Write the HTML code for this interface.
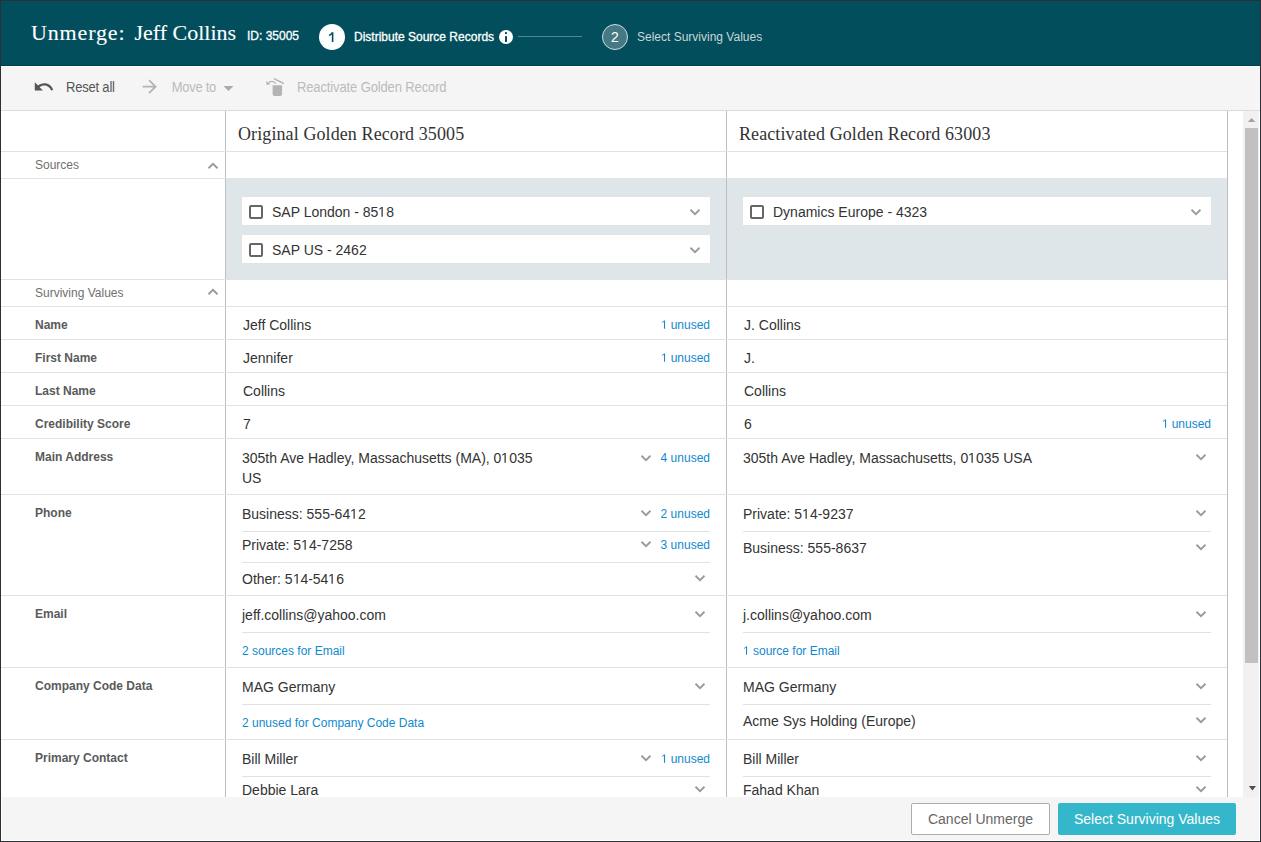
<!DOCTYPE html>
<html><head><meta charset="utf-8"><style>
html,body{margin:0;padding:0;width:1261px;height:842px;overflow:hidden;background:#2c3034}
.t{position:absolute;white-space:nowrap;line-height:20px}
</style></head><body>
<div style="position:absolute;left:0px;top:0px;width:1261px;height:842px;background:#2c3034"></div>
<div style="position:absolute;left:1px;top:1px;width:1259px;height:840px;background:#fff"></div>
<div style="position:absolute;left:1px;top:1px;width:1259px;height:65px;background:#024e5c"></div>
<div style="position:absolute;left:1px;top:65px;width:1259px;height:1px;background:#023f4a"></div>
<div class="t" style="left:31px;top:23px;font-family:'Liberation Serif', serif;font-size:22px;color:#fff;letter-spacing:0.85px;-webkit-text-stroke:0.1px #fff;">Unmerge:</div>
<div class="t" style="left:134.5px;top:23px;font-family:'Liberation Serif', serif;font-size:22px;color:#fff;-webkit-text-stroke:0.1px #fff;">Jeff Collins</div>
<div class="t" style="left:247px;top:26px;font-family:'Liberation Sans', sans-serif;font-size:12px;color:#fff;-webkit-text-stroke:0.3px #fff;">ID: 35005</div>
<div style="position:absolute;left:319px;top:24px;width:26px;height:26px;background:#fff;border-radius:50%"></div>
<svg style="position:absolute;left:0;top:0" width="400" height="60"><path d="M331.6,32.2 H333.4 V42 H331.8 V34.6 Q330.6,35.6 328.9,36.2 V34.7 Q330.8,33.8 331.6,32.2z" fill="#024e5c"/></svg>
<div class="t" style="left:354px;top:27px;font-family:'Liberation Sans', sans-serif;font-size:12px;color:#fff;-webkit-text-stroke:0.3px #fff;">Distribute Source Records</div>
<div style="position:absolute;left:499px;top:30px;width:14px;height:14px;background:#fff;border-radius:50%"></div>
<div style="position:absolute;left:505px;top:35.8px;width:2.4px;height:6px;background:#024e5c;border-radius:0.5px"></div>
<div style="position:absolute;left:505px;top:32.2px;width:2.4px;height:2px;background:#024e5c;border-radius:0.5px"></div>
<div style="position:absolute;left:518px;top:36px;width:64px;height:1px;background:#4f8792"></div>
<div style="position:absolute;left:602px;top:24px;width:26px;height:26px;background:#457a84;border-radius:50%;box-sizing:border-box;border:1px solid #d0dcde"></div>
<div class="t" style="left:602px;top:27px;font-family:'Liberation Sans', sans-serif;font-size:14px;color:#fff;width:26px;text-align:center;">2</div>
<div class="t" style="left:637px;top:27px;font-family:'Liberation Sans', sans-serif;font-size:12px;color:#c9d6d9;">Select Surviving Values</div>
<div style="position:absolute;left:1px;top:66px;width:1259px;height:1px;background:#fff"></div>
<div style="position:absolute;left:1px;top:67px;width:1259px;height:43px;background:#f5f5f5"></div>
<div style="position:absolute;left:1px;top:110px;width:1259px;height:1px;background:#dcdcdc"></div>
<div class="t" style="left:66px;top:78px;font-family:'Liberation Sans', sans-serif;font-size:13px;color:#555;letter-spacing:-0.2px;transform:scaleY(1.07);transform-origin:0 14px;">Reset all</div>
<svg style="position:absolute;left:32.7px;top:76px" width="24" height="24" viewBox="0 0 24 24"><g transform="scale(0.9)"><path fill="#555" d="M12.5 8c-2.65 0-5.05.99-6.9 2.6L2 7v9h9l-3.62-3.62c1.39-1.16 3.16-1.88 5.12-1.88 3.54 0 6.55 2.31 7.6 5.5l2.37-.78C21.08 11.03 17.15 8 12.5 8z"/></g></svg>
<svg style="position:absolute;left:139.4px;top:76px" width="24" height="24" viewBox="0 0 24 24"><g transform="scale(0.89)"><path fill="#b3b3b3" d="M12 4l-1.41 1.41L16.17 11H4v2h12.17l-5.58 5.59L12 20l8-8z"/></g></svg>
<svg style="position:absolute;left:0;top:0" width="300" height="100"><path d="M223.5,86.1 L233.5,86.1 L228.5,91.1z" fill="#aaa"/><path d="M272.6,85.2 H282.1 V94 Q282.1,95.9 280.2,95.9 H274.5 Q272.6,95.9 272.6,94z" fill="#b4b4b4"/><path d="M274,78.6 L283.8,83.6" stroke="#b4b4b4" stroke-width="1.6"/><path d="M275.8,83.6 Q272.5,79.6 268.8,82.6" fill="none" stroke="#b4b4b4" stroke-width="1.3"/><path d="M266.3,81 L266.5,84.9 L270.5,84.3z" fill="#b4b4b4"/></svg>
<div class="t" style="left:171.8px;top:78px;font-family:'Liberation Sans', sans-serif;font-size:13px;color:#bbb;letter-spacing:-0.3px;transform:scaleY(1.07);transform-origin:0 14px;">Move to</div>
<div class="t" style="left:297px;top:78px;font-family:'Liberation Sans', sans-serif;font-size:13px;color:#bbb;letter-spacing:-0.125px;transform:scaleY(1.07);transform-origin:0 14px;">Reactivate Golden Record</div>
<div style="position:absolute;left:225px;top:111px;width:1px;height:686px;background:#bdbdbd"></div>
<div style="position:absolute;left:726px;top:111px;width:1px;height:686px;background:#bdbdbd"></div>
<div style="position:absolute;left:1227px;top:111px;width:1px;height:686px;background:#bdbdbd"></div>
<div style="position:absolute;left:1px;top:151px;width:1226px;height:1px;background:#e2e2e2"></div>
<div style="position:absolute;left:1px;top:178px;width:1226px;height:1px;background:#e2e2e2"></div>
<div style="position:absolute;left:1px;top:279px;width:1226px;height:1px;background:#e2e2e2"></div>
<div style="position:absolute;left:1px;top:306px;width:1226px;height:1px;background:#e2e2e2"></div>
<div style="position:absolute;left:1px;top:339px;width:1226px;height:1px;background:#e2e2e2"></div>
<div style="position:absolute;left:1px;top:372px;width:1226px;height:1px;background:#e2e2e2"></div>
<div style="position:absolute;left:1px;top:405px;width:1226px;height:1px;background:#e2e2e2"></div>
<div style="position:absolute;left:1px;top:438px;width:1226px;height:1px;background:#e2e2e2"></div>
<div style="position:absolute;left:1px;top:494px;width:1226px;height:1px;background:#e2e2e2"></div>
<div style="position:absolute;left:1px;top:595px;width:1226px;height:1px;background:#e2e2e2"></div>
<div style="position:absolute;left:1px;top:667px;width:1226px;height:1px;background:#e2e2e2"></div>
<div style="position:absolute;left:1px;top:739px;width:1226px;height:1px;background:#e2e2e2"></div>
<div class="t" style="left:238px;top:124px;font-family:'Liberation Serif', serif;font-size:18px;color:#333;letter-spacing:0.1px;">Original Golden Record 35005</div>
<div class="t" style="left:739px;top:124px;font-family:'Liberation Serif', serif;font-size:18px;color:#333;letter-spacing:0.1px;">Reactivated Golden Record 63003</div>
<div class="t" style="left:35px;top:155px;font-family:'Liberation Sans', sans-serif;font-size:12px;color:#707070;">Sources</div>
<svg style="position:absolute;left:203px;top:158.5px" width="20" height="14"><path d="M5.5,9.25 L10,4.75 L14.5,9.25" fill="none" stroke="#9a9a9a" stroke-width="1.8"/></svg>
<div class="t" style="left:35px;top:283px;font-family:'Liberation Sans', sans-serif;font-size:12px;color:#707070;">Surviving Values</div>
<svg style="position:absolute;left:203px;top:284.5px" width="20" height="14"><path d="M5.5,9.25 L10,4.75 L14.5,9.25" fill="none" stroke="#9a9a9a" stroke-width="1.8"/></svg>
<div style="position:absolute;left:226px;top:179px;width:500px;height:100px;background:#dfe6e9"></div>
<div style="position:absolute;left:727px;top:179px;width:500px;height:100px;background:#dfe6e9"></div>
<div style="position:absolute;left:241px;top:196px;width:470px;height:30px;background:#fff;box-sizing:border-box;border:1px solid #e3e3e3"></div>
<div style="position:absolute;left:249px;top:205px;width:14px;height:14px;box-sizing:border-box;border:2px solid #666;border-radius:2px;background:#fff"></div>
<div class="t" style="left:272px;top:202px;font-family:'Liberation Sans', sans-serif;font-size:14px;color:#333;">SAP London - 85<svg width="7.786" height="12.674" viewBox="0 0 1139 1854" style="vertical-align:baseline"><path fill="#333" transform="translate(0,1854) scale(1,-1)" d="M515 0V1237L197 1010V1180L530 1409H696V0Z"/></svg>8</div>
<svg style="position:absolute;left:685px;top:205px" width="20" height="14"><path d="M5.5,4.75 L10,9.25 L14.5,4.75" fill="none" stroke="#9a9a9a" stroke-width="1.8"/></svg>
<div style="position:absolute;left:241px;top:234px;width:470px;height:30px;background:#fff;box-sizing:border-box;border:1px solid #e3e3e3"></div>
<div style="position:absolute;left:249px;top:243px;width:14px;height:14px;box-sizing:border-box;border:2px solid #666;border-radius:2px;background:#fff"></div>
<div class="t" style="left:272px;top:240px;font-family:'Liberation Sans', sans-serif;font-size:14px;color:#333;">SAP US - 2462</div>
<svg style="position:absolute;left:685px;top:243px" width="20" height="14"><path d="M5.5,4.75 L10,9.25 L14.5,4.75" fill="none" stroke="#9a9a9a" stroke-width="1.8"/></svg>
<div style="position:absolute;left:742px;top:196px;width:470px;height:30px;background:#fff;box-sizing:border-box;border:1px solid #e3e3e3"></div>
<div style="position:absolute;left:750px;top:205px;width:14px;height:14px;box-sizing:border-box;border:2px solid #666;border-radius:2px;background:#fff"></div>
<div class="t" style="left:773px;top:202px;font-family:'Liberation Sans', sans-serif;font-size:14px;color:#333;">Dynamics Europe - 4323</div>
<svg style="position:absolute;left:1186px;top:205px" width="20" height="14"><path d="M5.5,4.75 L10,9.25 L14.5,4.75" fill="none" stroke="#9a9a9a" stroke-width="1.8"/></svg>
<div class="t" style="left:35px;top:315px;font-family:'Liberation Sans', sans-serif;font-size:12px;font-weight:bold;color:#5a5a5a;">Name</div>
<div class="t" style="left:35px;top:348px;font-family:'Liberation Sans', sans-serif;font-size:12px;font-weight:bold;color:#5a5a5a;">First Name</div>
<div class="t" style="left:35px;top:381px;font-family:'Liberation Sans', sans-serif;font-size:12px;font-weight:bold;color:#5a5a5a;">Last Name</div>
<div class="t" style="left:35px;top:414px;font-family:'Liberation Sans', sans-serif;font-size:12px;font-weight:bold;color:#5a5a5a;">Credibility Score</div>
<div class="t" style="left:35px;top:447px;font-family:'Liberation Sans', sans-serif;font-size:12px;font-weight:bold;color:#5a5a5a;">Main Address</div>
<div class="t" style="left:35px;top:503px;font-family:'Liberation Sans', sans-serif;font-size:12px;font-weight:bold;color:#5a5a5a;">Phone</div>
<div class="t" style="left:35px;top:604px;font-family:'Liberation Sans', sans-serif;font-size:12px;font-weight:bold;color:#5a5a5a;">Email</div>
<div class="t" style="left:35px;top:676px;font-family:'Liberation Sans', sans-serif;font-size:12px;font-weight:bold;color:#5a5a5a;">Company Code Data</div>
<div class="t" style="left:35px;top:748px;font-family:'Liberation Sans', sans-serif;font-size:12px;font-weight:bold;color:#5a5a5a;">Primary Contact</div>
<div class="t" style="left:243px;top:315px;font-family:'Liberation Sans', sans-serif;font-size:14px;color:#333;">Jeff Collins</div>
<div class="t" style="right:551px;top:315px;font-family:'Liberation Sans', sans-serif;font-size:12px;color:#0f89cf;"><svg width="6.674" height="10.863" viewBox="0 0 1139 1854" style="vertical-align:baseline"><path fill="#0f89cf" transform="translate(0,1854) scale(1,-1)" d="M515 0V1237L197 1010V1180L530 1409H696V0Z"/></svg> unused</div>
<div class="t" style="left:243px;top:348px;font-family:'Liberation Sans', sans-serif;font-size:14px;color:#333;">Jennifer</div>
<div class="t" style="right:551px;top:348px;font-family:'Liberation Sans', sans-serif;font-size:12px;color:#0f89cf;"><svg width="6.674" height="10.863" viewBox="0 0 1139 1854" style="vertical-align:baseline"><path fill="#0f89cf" transform="translate(0,1854) scale(1,-1)" d="M515 0V1237L197 1010V1180L530 1409H696V0Z"/></svg> unused</div>
<div class="t" style="left:243px;top:381px;font-family:'Liberation Sans', sans-serif;font-size:14px;color:#333;">Collins</div>
<div class="t" style="left:243px;top:414px;font-family:'Liberation Sans', sans-serif;font-size:14px;color:#333;">7</div>
<div class="t" style="left:242px;top:448px;font-family:'Liberation Sans', sans-serif;font-size:14px;color:#333;">305th Ave Hadley, Massachusetts (MA), 0<svg width="7.786" height="12.674" viewBox="0 0 1139 1854" style="vertical-align:baseline"><path fill="#333" transform="translate(0,1854) scale(1,-1)" d="M515 0V1237L197 1010V1180L530 1409H696V0Z"/></svg>035</div>
<div class="t" style="left:242px;top:468px;font-family:'Liberation Sans', sans-serif;font-size:14px;color:#333;">US</div>
<svg style="position:absolute;left:636px;top:450.5px" width="20" height="14"><path d="M5.5,4.75 L10,9.25 L14.5,4.75" fill="none" stroke="#9a9a9a" stroke-width="1.8"/></svg>
<div class="t" style="right:551px;top:448px;font-family:'Liberation Sans', sans-serif;font-size:12px;color:#0f89cf;">4 unused</div>
<div class="t" style="left:242px;top:504px;font-family:'Liberation Sans', sans-serif;font-size:14px;color:#333;">Business: 555-64<svg width="7.786" height="12.674" viewBox="0 0 1139 1854" style="vertical-align:baseline"><path fill="#333" transform="translate(0,1854) scale(1,-1)" d="M515 0V1237L197 1010V1180L530 1409H696V0Z"/></svg>2</div>
<svg style="position:absolute;left:636px;top:506px" width="20" height="14"><path d="M5.5,4.75 L10,9.25 L14.5,4.75" fill="none" stroke="#9a9a9a" stroke-width="1.8"/></svg>
<div class="t" style="right:551px;top:504px;font-family:'Liberation Sans', sans-serif;font-size:12px;color:#0f89cf;">2 unused</div>
<div style="position:absolute;left:242px;top:531px;width:468px;height:1px;background:#e2e2e2"></div>
<div class="t" style="left:242px;top:535px;font-family:'Liberation Sans', sans-serif;font-size:14px;color:#333;">Private: 5<svg width="7.786" height="12.674" viewBox="0 0 1139 1854" style="vertical-align:baseline"><path fill="#333" transform="translate(0,1854) scale(1,-1)" d="M515 0V1237L197 1010V1180L530 1409H696V0Z"/></svg>4-7258</div>
<svg style="position:absolute;left:636px;top:537px" width="20" height="14"><path d="M5.5,4.75 L10,9.25 L14.5,4.75" fill="none" stroke="#9a9a9a" stroke-width="1.8"/></svg>
<div class="t" style="right:551px;top:535px;font-family:'Liberation Sans', sans-serif;font-size:12px;color:#0f89cf;">3 unused</div>
<div style="position:absolute;left:242px;top:562px;width:468px;height:1px;background:#e2e2e2"></div>
<div class="t" style="left:242px;top:569px;font-family:'Liberation Sans', sans-serif;font-size:14px;color:#333;">Other: 5<svg width="7.786" height="12.674" viewBox="0 0 1139 1854" style="vertical-align:baseline"><path fill="#333" transform="translate(0,1854) scale(1,-1)" d="M515 0V1237L197 1010V1180L530 1409H696V0Z"/></svg>4-54<svg width="7.786" height="12.674" viewBox="0 0 1139 1854" style="vertical-align:baseline"><path fill="#333" transform="translate(0,1854) scale(1,-1)" d="M515 0V1237L197 1010V1180L530 1409H696V0Z"/></svg>6</div>
<svg style="position:absolute;left:690px;top:571px" width="20" height="14"><path d="M5.5,4.75 L10,9.25 L14.5,4.75" fill="none" stroke="#9a9a9a" stroke-width="1.8"/></svg>
<div class="t" style="left:242px;top:605px;font-family:'Liberation Sans', sans-serif;font-size:14px;color:#333;">jeff.collins@yahoo.com</div>
<svg style="position:absolute;left:690px;top:607px" width="20" height="14"><path d="M5.5,4.75 L10,9.25 L14.5,4.75" fill="none" stroke="#9a9a9a" stroke-width="1.8"/></svg>
<div style="position:absolute;left:242px;top:632px;width:468px;height:1px;background:#e2e2e2"></div>
<div class="t" style="left:242px;top:641px;font-family:'Liberation Sans', sans-serif;font-size:12px;color:#0f89cf;">2 sources for Email</div>
<div class="t" style="left:242px;top:677px;font-family:'Liberation Sans', sans-serif;font-size:14px;color:#333;">MAG Germany</div>
<svg style="position:absolute;left:690px;top:679px" width="20" height="14"><path d="M5.5,4.75 L10,9.25 L14.5,4.75" fill="none" stroke="#9a9a9a" stroke-width="1.8"/></svg>
<div style="position:absolute;left:242px;top:704px;width:468px;height:1px;background:#e2e2e2"></div>
<div class="t" style="left:242px;top:713px;font-family:'Liberation Sans', sans-serif;font-size:12px;color:#0f89cf;">2 unused for Company Code Data</div>
<div class="t" style="left:242px;top:749px;font-family:'Liberation Sans', sans-serif;font-size:14px;color:#333;">Bill Miller</div>
<svg style="position:absolute;left:636px;top:751px" width="20" height="14"><path d="M5.5,4.75 L10,9.25 L14.5,4.75" fill="none" stroke="#9a9a9a" stroke-width="1.8"/></svg>
<div class="t" style="right:551px;top:749px;font-family:'Liberation Sans', sans-serif;font-size:12px;color:#0f89cf;"><svg width="6.674" height="10.863" viewBox="0 0 1139 1854" style="vertical-align:baseline"><path fill="#0f89cf" transform="translate(0,1854) scale(1,-1)" d="M515 0V1237L197 1010V1180L530 1409H696V0Z"/></svg> unused</div>
<div style="position:absolute;left:242px;top:776px;width:468px;height:1px;background:#e2e2e2"></div>
<div class="t" style="left:242px;top:780px;font-family:'Liberation Sans', sans-serif;font-size:14px;color:#333;">Debbie Lara</div>
<svg style="position:absolute;left:690px;top:782px" width="20" height="14"><path d="M5.5,4.75 L10,9.25 L14.5,4.75" fill="none" stroke="#9a9a9a" stroke-width="1.8"/></svg>
<div class="t" style="left:744px;top:315px;font-family:'Liberation Sans', sans-serif;font-size:14px;color:#333;">J. Collins</div>
<div class="t" style="left:744px;top:348px;font-family:'Liberation Sans', sans-serif;font-size:14px;color:#333;">J.</div>
<div class="t" style="left:744px;top:381px;font-family:'Liberation Sans', sans-serif;font-size:14px;color:#333;">Collins</div>
<div class="t" style="left:744px;top:414px;font-family:'Liberation Sans', sans-serif;font-size:14px;color:#333;">6</div>
<div class="t" style="right:50px;top:414px;font-family:'Liberation Sans', sans-serif;font-size:12px;color:#0f89cf;"><svg width="6.674" height="10.863" viewBox="0 0 1139 1854" style="vertical-align:baseline"><path fill="#0f89cf" transform="translate(0,1854) scale(1,-1)" d="M515 0V1237L197 1010V1180L530 1409H696V0Z"/></svg> unused</div>
<div class="t" style="left:743px;top:448px;font-family:'Liberation Sans', sans-serif;font-size:14px;color:#333;">305th Ave Hadley, Massachusetts, 0<svg width="7.786" height="12.674" viewBox="0 0 1139 1854" style="vertical-align:baseline"><path fill="#333" transform="translate(0,1854) scale(1,-1)" d="M515 0V1237L197 1010V1180L530 1409H696V0Z"/></svg>035 USA</div>
<svg style="position:absolute;left:1191px;top:450px" width="20" height="14"><path d="M5.5,4.75 L10,9.25 L14.5,4.75" fill="none" stroke="#9a9a9a" stroke-width="1.8"/></svg>
<div class="t" style="left:743px;top:504px;font-family:'Liberation Sans', sans-serif;font-size:14px;color:#333;">Private: 5<svg width="7.786" height="12.674" viewBox="0 0 1139 1854" style="vertical-align:baseline"><path fill="#333" transform="translate(0,1854) scale(1,-1)" d="M515 0V1237L197 1010V1180L530 1409H696V0Z"/></svg>4-9237</div>
<svg style="position:absolute;left:1191px;top:506px" width="20" height="14"><path d="M5.5,4.75 L10,9.25 L14.5,4.75" fill="none" stroke="#9a9a9a" stroke-width="1.8"/></svg>
<div style="position:absolute;left:743px;top:531px;width:468px;height:1px;background:#e2e2e2"></div>
<div class="t" style="left:743px;top:538px;font-family:'Liberation Sans', sans-serif;font-size:14px;color:#333;">Business: 555-8637</div>
<svg style="position:absolute;left:1191px;top:540px" width="20" height="14"><path d="M5.5,4.75 L10,9.25 L14.5,4.75" fill="none" stroke="#9a9a9a" stroke-width="1.8"/></svg>
<div class="t" style="left:743px;top:605px;font-family:'Liberation Sans', sans-serif;font-size:14px;color:#333;">j.collins@yahoo.com</div>
<svg style="position:absolute;left:1191px;top:607px" width="20" height="14"><path d="M5.5,4.75 L10,9.25 L14.5,4.75" fill="none" stroke="#9a9a9a" stroke-width="1.8"/></svg>
<div style="position:absolute;left:743px;top:632px;width:468px;height:1px;background:#e2e2e2"></div>
<div class="t" style="left:743px;top:641px;font-family:'Liberation Sans', sans-serif;font-size:12px;color:#0f89cf;"><svg width="6.674" height="10.863" viewBox="0 0 1139 1854" style="vertical-align:baseline"><path fill="#0f89cf" transform="translate(0,1854) scale(1,-1)" d="M515 0V1237L197 1010V1180L530 1409H696V0Z"/></svg> source for Email</div>
<div class="t" style="left:743px;top:677px;font-family:'Liberation Sans', sans-serif;font-size:14px;color:#333;">MAG Germany</div>
<svg style="position:absolute;left:1191px;top:679px" width="20" height="14"><path d="M5.5,4.75 L10,9.25 L14.5,4.75" fill="none" stroke="#9a9a9a" stroke-width="1.8"/></svg>
<div style="position:absolute;left:743px;top:704px;width:468px;height:1px;background:#e2e2e2"></div>
<div class="t" style="left:743px;top:711px;font-family:'Liberation Sans', sans-serif;font-size:14px;color:#333;">Acme Sys Holding (Europe)</div>
<svg style="position:absolute;left:1191px;top:713px" width="20" height="14"><path d="M5.5,4.75 L10,9.25 L14.5,4.75" fill="none" stroke="#9a9a9a" stroke-width="1.8"/></svg>
<div class="t" style="left:743px;top:749px;font-family:'Liberation Sans', sans-serif;font-size:14px;color:#333;">Bill Miller</div>
<svg style="position:absolute;left:1191px;top:751px" width="20" height="14"><path d="M5.5,4.75 L10,9.25 L14.5,4.75" fill="none" stroke="#9a9a9a" stroke-width="1.8"/></svg>
<div style="position:absolute;left:743px;top:776px;width:468px;height:1px;background:#e2e2e2"></div>
<div class="t" style="left:743px;top:780px;font-family:'Liberation Sans', sans-serif;font-size:14px;color:#333;">Fahad Khan</div>
<svg style="position:absolute;left:1191px;top:782px" width="20" height="14"><path d="M5.5,4.75 L10,9.25 L14.5,4.75" fill="none" stroke="#9a9a9a" stroke-width="1.8"/></svg>
<div style="position:absolute;left:1243px;top:111px;width:16px;height:686px;background:#f1f1f1"></div>
<div style="position:absolute;left:1245px;top:128px;width:13px;height:535px;background:#c1c1c1"></div>
<svg style="position:absolute;left:0;top:0" width="1261" height="842"><path d="M1247.8,122 L1255.3,122 L1251.55,118z" fill="#a3a3a3"/><path d="M1248.8,786 L1256,786 L1252.4,790.5z" fill="#505050"/></svg>
<div style="position:absolute;left:2px;top:797px;width:1257px;height:43px;background:#f5f5f5"></div>
<div style="position:absolute;left:911px;top:803px;width:139px;height:32px;background:#fff;box-sizing:border-box;border:1px solid #adadad;border-radius:2px"></div>
<div class="t" style="left:911px;top:809px;font-family:'Liberation Sans', sans-serif;font-size:14px;color:#666;width:139px;text-align:center;">Cancel Unmerge</div>
<div style="position:absolute;left:1058px;top:803px;width:178px;height:32px;background:#35b7cb;border-radius:2px"></div>
<div class="t" style="left:1058px;top:809px;font-family:'Liberation Sans', sans-serif;font-size:14px;color:#fff;width:178px;text-align:center;">Select Surviving Values</div>
</body></html>
